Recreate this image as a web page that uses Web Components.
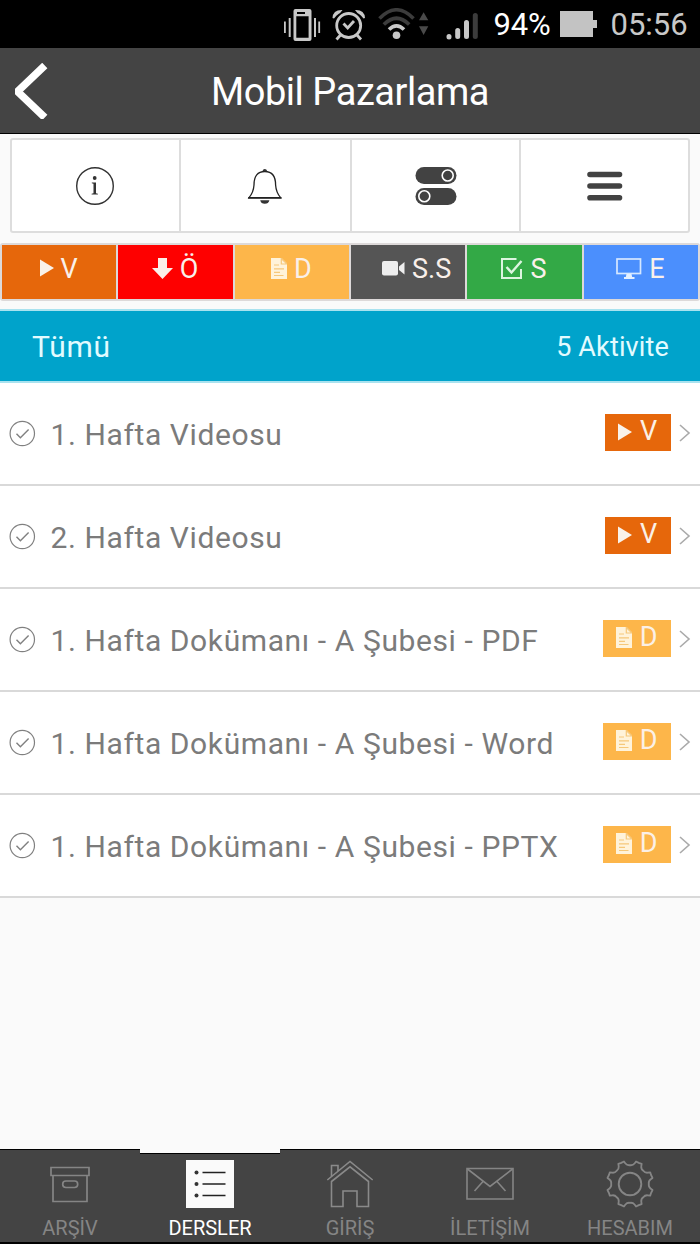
<!DOCTYPE html>
<html lang="tr">
<head>
<meta charset="utf-8">
<title>Mobil Pazarlama</title>
<style>
html,body{margin:0;padding:0}
body{width:700px;height:1244px;overflow:hidden;background:#fafafa;font-family:Roboto,"Noto Sans",sans-serif}
</style>
</head>
<body>
<course-app></course-app>
<script>
const svg = (w, h, body, extra = '') => `<svg xmlns="http://www.w3.org/2000/svg" width="${w}" height="${h}" viewBox="0 0 ${w} ${h}" fill="none" ${extra}>${body}</svg>`;

const GEAR = (() => {
  const n = 8, c = 24, pts = [];
  for (let i = 0; i < n; i++) {
    const a = (i * 45 - 90) * Math.PI / 180, r = Math.PI / 180;
    const p = (d, R) => (c + R * Math.cos(a + d * r)).toFixed(2) + ' ' + (c + R * Math.sin(a + d * r)).toFixed(2);
    pts.push((i ? 'L' : 'M') + p(-15, 23.3) + 'L' + p(-12.5, 21) + 'Q' + p(-9, 18.6) + ' ' + p(0, 18.8) + 'Q' + p(9, 18.6) + ' ' + p(12.5, 21) + 'L' + p(15, 23.3) + 'L' + p(22.5, 22.9));
  }
  return pts.join('') + 'Z';
})();

const ICONS = {
  back: svg(33, 56, '<path d="M31.300 2.500 4 28.500 31.300 54.500" transform="translate(-1.500 0)" stroke="#fff" stroke-width="7.500"/>'),
  vibrate: svg(38, 33, '<g fill="#c8c8c8"><path fill-rule="evenodd" d="M11.500 0h14q2 0 2 2v28q0 2-2 2h-14q-2 0-2-2V2q0-2 2-2zM12.300 7.300v21.500h12.300V7.300zM13 3v2h8V3z"/><path d="M22.500 3h2v2h-2zM4.700 9h2v19h-2zM0 12.500h1.800v11.500H0zM30 9h2v19h-2zM34.300 12.500h1.800v11.500h-1.800z"/></g>'),
  alarm: svg(34, 33, '<g stroke="#c8c8c8"><circle cx="16.700" cy="16.500" r="12" stroke-width="2.800"/><path d="M11.500 14.500 15.700 19l6.300-7M8.500 26l-4 4.500M25 26l4 4.500" stroke-width="2.800"/></g><path d="M.5 9Q1 .5 10.500 1 8.500 4 6.500 5T2 9.500zM33 9Q32.500.5 23 1q2 3 4 4t4.500 4.500z" fill="#c8c8c8"/>'),
  wifi: svg(52, 32, '<g stroke-width="3.600"><path d="M1.500 10.500Q18.500-7 35.500 10.500" stroke="#3c3c3c"/><path d="M5.800 16.500Q18.500 4 31.200 16.500" stroke="#3c3c3c"/><path d="M11 21.500q7.500-7.500 15 0" stroke="#c8c8c8"/></g><circle cx="18.500" cy="27.200" r="3.800" fill="#c8c8c8"/><path d="M41 12.300h9.300L45.600 4.300zM41 18.300h9.300L45.600 27z" fill="#4a4a4a"/>'),
  signal: svg(33, 28, '<g stroke-width="5" stroke-linecap="round"><path d="M3 24.500v.5M11.700 18.500v6M20.500 10.500v14" stroke="#c8c8c8"/><path d="M29.300 3.500v21" stroke="#3c3c3c"/></g>'),
  battery: svg(37, 26, '<path d="M0 0h33v9h4v8h-4v9H0z" fill="#c3c3c3"/>'),
  info: svg(40, 40, '<circle cx="20" cy="20" r="18.300" stroke="#333" stroke-width="1.400"/><circle cx="19.700" cy="12" r="1.900" fill="#333"/><path d="M16.800 16.500h4.200v10.800l1.900.4v.8h-6.300v-.8l1.900-.4v-9.500l-1.700-.5z" fill="#333"/>'),
  bell: svg(36, 36, '<path d="M2 29.600Q6.500 24.500 7 17 7 3.500 17.800 3.500T28.600 17q.5 7.500 5 12.600z" stroke="#222" stroke-width="1.300"/><path d="M1 30h33.500" stroke="#222" stroke-width="1.300"/><path d="M15.300 3.300q.8-2.300 2.500-2.300t2.500 2.300zM13.200 32.300h9.200q-.8 3.500-4.600 3.500t-4.600-3.500z" fill="#333"/>'),
  toggles: svg(42, 38, '<rect x=".5" width="41" height="17" rx="8.500" fill="#424242"/><rect x=".5" y="21" width="41" height="17" rx="8.500" fill="#424242"/><g stroke="#fff" stroke-width="1.600"><circle cx="32.700" cy="8.500" r="5.500"/><circle cx="9.300" cy="29.300" r="5.500"/></g>'),
  menu: svg(36, 30, '<path d="M3 3.500h29.500M3 15h29.500M3 26.800h29.500" stroke="#424242" stroke-width="5.600" stroke-linecap="round"/>'),
  play: svg(14, 18, '<path d="M0 .5v17l14-8.500z" fill="#f9f2ea"/>'),
  down: svg(21, 21, '<path d="M6 0h9v10h6L10.500 21 0 10h6z" fill="#fbeee8"/>'),
  doc: svg(16, 21, '<path d="M0 0h10.500l5.500 5.500V21H0z" fill="#fff3da"/><path d="M10.300.5V6H16zM3 10.800h10M3 14.300h6M3 17.500h9.500" stroke="#f6c87a" stroke-width="1.200"/><path d="M3 7h5" stroke="#f6c87a"/>'),
  camera: svg(23, 15, '<rect width="16" height="14.500" rx="2" fill="#eee"/><path d="M17 5.500l5.500-4.500v12.500L17 9z" fill="#eee"/>'),
  check: svg(22, 21, '<path d="M15.500 1H1v19h19v-9" stroke="#dcf5e0" stroke-width="2"/><path d="M5.500 9l5 5.500L20.500 3" stroke="#dcf5e0" stroke-width="2.400"/>'),
  monitor: svg(26, 21, '<rect x="1" y="1" width="23.500" height="14.500" stroke="#d5e7ff" stroke-width="1.700"/><path d="M10.500 16h5l.7 3h2.300v2H8v-2h1.800z" fill="#e4f0ff"/>'),
  done: svg(27, 27, '<circle cx="13.300" cy="13.500" r="12.200" stroke="#808080" stroke-width="1.200"/><path d="M7.500 13.700l3.900 4 8.200-8.200" stroke="#808080" stroke-width="1.400"/>'),
  chevron: svg(12, 18, '<path d="M1 1l9 8-9 8" stroke="#aaa" stroke-width="1.600"/>'),
  archive: svg(40, 37, '<g stroke="#858585" stroke-width="1.700"><path d="M1 1.500h38v8H1zM3 9.500h34v26H3z"/><rect x="12.700" y="15" width="15" height="6.500" rx="3.200"/></g>'),
  list: svg(48, 48, '<path d="M0 0h48v48H0z" fill="#fafafa"/><path d="M16.500 12.500h23M16.500 24h23M16.500 35.500h23" stroke="#222" stroke-width="1.300"/><g fill="#333"><circle cx="10.500" cy="12.500" r="2"/><circle cx="10.500" cy="24" r="2"/><circle cx="10.500" cy="35.500" r="2"/></g>'),
  home: svg(48, 50, '<g stroke="#8a8a8a" stroke-width="1.600"><path d="M1.300 21 24 2.500 46.700 21M5.500 22.500V47.500H17V32H31V47.500H42.500V22.500L24 7.800z"/><path d="M5.500 17.500V6.500h6.500v5.500"/></g>'),
  mail: svg(48, 34, '<g stroke="#858585" stroke-width="1.600"><path d="M1 1.500h46v30.500H1z"/><path d="M1.500 2 24 19.500 46.500 2M17 14.500 8.500 24M31 14.500l8.500 9.500"/></g>'),
  gear: svg(48, 48, `<path d="${GEAR}" stroke="#858585" stroke-width="1.800" stroke-linejoin="round"/><circle cx="24" cy="24" r="11.300" stroke="#858585" stroke-width="1.900"/>`)
};

class Base extends HTMLElement {
  connectedCallback() {
    if (this.shadowRoot) return;
    const t = document.createElement('template');
    t.innerHTML = this.markup();
    this.attachShadow({ mode: 'open' }).append(t.content.cloneNode(true));
  }
}
const define = (name, markup) => customElements.define(name, class extends Base { markup() { return markup(this); } });

define('app-icon', el => `<style>:host{display:block;flex:none}svg{display:block}</style>${ICONS[el.getAttribute('name')]}`);

define('status-bar', () => `<style>
:host{display:flex;height:48px;background:#000;color:#fff;font-size:31px;line-height:49px;padding-left:284px;box-sizing:border-box;white-space:nowrap}
app-icon{margin-right:10px}
.pct{width:66px;letter-spacing:-.2px}.time{color:#c8c8c8}
</style>
<app-icon name="vibrate" style="margin-top:9px"></app-icon>
<app-icon name="alarm" style="margin-top:8.500px"></app-icon>
<app-icon name="wifi" style="margin:8px 15.500px 0 2px"></app-icon>
<app-icon name="signal" style="margin:12px 15px 0 0"></app-icon>
<span class="pct">94%</span>
<app-icon name="battery" style="margin:11px 14px 0 0"></app-icon>
<span class="time">05:56</span>`);

define('title-bar', () => `<style>
:host{display:grid;grid-template-columns:60px 1fr 60px;height:86px;box-sizing:border-box;background:#444;border-bottom:1px solid #000;color:#fff}
app-icon{margin:15px 0 0 15px}
h1{margin:0;text-align:center;font-weight:400;font-size:38px;line-height:88px;letter-spacing:-.45px}
</style><app-icon name="back"></app-icon><h1><slot></slot></h1>`);

define('tool-bar', () => `<style>
:host{display:grid;grid-template-columns:169px 171px 169px 1fr;margin:4px 10px 0;height:95px;box-sizing:border-box;background:#fff;border:2px solid #ddd;border-radius:3px}
div{display:flex;align-items:center;justify-content:center;border-right:2px solid #ddd}
div:nth-child(4){padding-left:1px}
div:nth-child(3),div:nth-child(4){margin:0}
div:nth-child(2) app-icon,div:nth-child(3) app-icon{margin-right:1px}
div:last-child{border:0}
</style><div><app-icon name="info"></app-icon></div><div><app-icon name="bell"></app-icon></div><div><app-icon name="toggles"></app-icon></div><div><app-icon name="menu"></app-icon></div>`);

define('filter-bar', () => `<style>
:host{display:grid;grid-template-columns:repeat(6,1fr);gap:2px;margin-top:10px;height:58px;padding:2px;box-sizing:border-box;background:#ddd9d9;border-radius:3px}
</style><slot></slot>`);

define('filter-tab', el => `<style>
:host{display:flex;justify-content:center;box-sizing:border-box;padding-top:8px;padding-right:1px;background:${el.getAttribute('color')};color:#f9f0ea;font-size:27px;line-height:32px;font-weight:400;white-space:nowrap}
.i{display:flex;height:30px;align-items:center;margin-right:7px}
</style><span class="i"><app-icon name="${el.getAttribute('icon')}"></app-icon></span><slot></slot>`);

define('group-head', el => `<style>
:host{display:flex;justify-content:space-between;margin-top:8px;height:74px;box-sizing:border-box;background:#00a3cb;border:solid #a9e2ef;border-width:2px 0;color:#e2fbff;padding:0 31px 0 32px;line-height:72px}
b{font-weight:400;font-size:30px;letter-spacing:.7px}i{font-style:normal;font-size:27px;letter-spacing:.15px}
</style><b><slot></slot></b><i>${el.getAttribute('count')}</i>`);

define('activity-row', el => {
  const v = el.getAttribute('kind') === 'V';
  return `<style>
:host{display:flex;align-items:center;height:103px;box-sizing:border-box;background:#fff;border-bottom:2px solid #d9d9d9;color:#7b7b7b;padding:0 9px}
.t{flex:1;font-size:30px;line-height:40px;letter-spacing:.6px;margin-left:14.500px;padding-top:2px;white-space:nowrap}
.b{display:flex;width:${v ? 66 : 68}px;height:37px;box-sizing:border-box;justify-content:center;align-items:center;background:${v ? '#e6670b' : '#fdb64a'};color:#fbf0e6;font-size:27px;line-height:35px;padding:0 1px 2px 0;gap:8px;margin-right:8px;margin-top:-2px}
</style><app-icon name="done"></app-icon><span class="t"><slot></slot></span><span class="b"><app-icon name="${v ? 'play' : 'doc'}"></app-icon><span>${v ? 'V' : 'D'}</span></span><app-icon name="chevron" style="margin-top:-1px"></app-icon>`;
});

define('nav-bar', () => `<style>
:host{display:grid;grid-template-columns:repeat(5,1fr);height:95px;box-sizing:border-box;background:#444;border-bottom:2px solid #000}
</style><slot></slot>`);

define('nav-item', el => {
  const on = el.hasAttribute('active');
  return `<style>
:host{display:flex;flex-direction:column;align-items:center;box-sizing:border-box;border-top:1px solid #000;color:${on ? '#fff' : '#858585'};font-size:20px}
:host([active])::before{content:"";width:140px;height:5px;margin:-1px 0 -4px;background:#fafafa;border-bottom:1px solid #000;box-sizing:border-box;flex:none}
.i{display:flex;height:68px;align-items:center;flex:none}
.l{line-height:20px;letter-spacing:0}
</style><span class="i"><app-icon name="${el.getAttribute('icon')}"></app-icon></span><span class="l"><slot></slot></span>`;
});

define('course-app', () => `<style>
:host{display:flex;flex-direction:column;width:700px;height:1244px;background:#fafafa}
main{flex:1}
</style>
<status-bar></status-bar>
<title-bar>Mobil Pazarlama</title-bar>
<main>
<tool-bar></tool-bar>
<filter-bar>
<filter-tab icon="play" color="#e6670b">V</filter-tab>
<filter-tab icon="down" color="#fe0000">Ö</filter-tab>
<filter-tab icon="doc" color="#fdb64a">D</filter-tab>
<filter-tab icon="camera" color="#555" style="padding-left:18px">S.S</filter-tab>
<filter-tab icon="check" color="#33a946">S</filter-tab>
<filter-tab icon="monitor" color="#4b8ffd">E</filter-tab>
</filter-bar>
<group-head count="5 Aktivite">Tümü</group-head>
<activity-row kind="V">1. Hafta Videosu</activity-row>
<activity-row kind="V">2. Hafta Videosu</activity-row>
<activity-row kind="D">1. Hafta Dokümanı - A Şubesi - PDF</activity-row>
<activity-row kind="D">1. Hafta Dokümanı - A Şubesi - Word</activity-row>
<activity-row kind="D">1. Hafta Dokümanı - A Şubesi - PPTX</activity-row>
</main>
<nav-bar>
<nav-item icon="archive">ARŞİV</nav-item>
<nav-item icon="list" active>DERSLER</nav-item>
<nav-item icon="home">GİRİŞ</nav-item>
<nav-item icon="mail">İLETİŞİM</nav-item>
<nav-item icon="gear">HESABIM</nav-item>
</nav-bar>`);
</script>
</body>
</html>
